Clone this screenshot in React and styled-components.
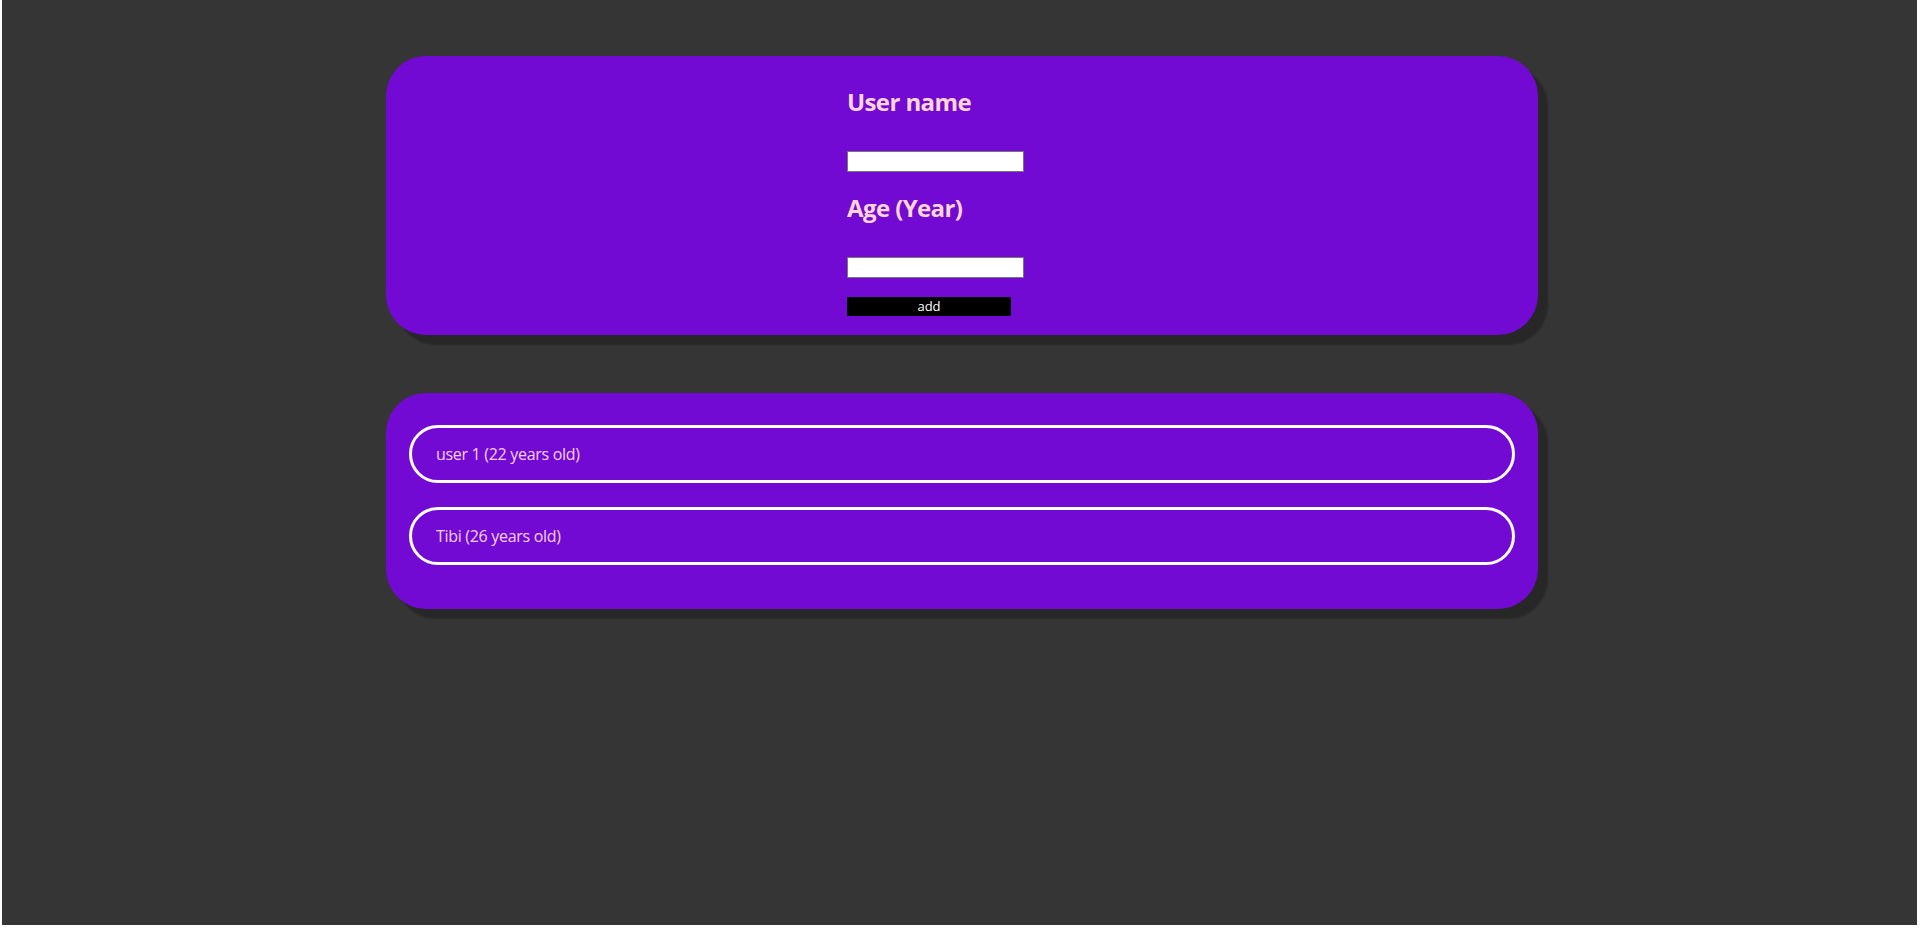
import React from "react";
import styled, { createGlobalStyle } from "styled-components";

const GlobalStyle = createGlobalStyle`
    html, body {
        margin: 0;
        padding: 0;
        background: #ffffff;
    }
    body {
        font-family: "Open Sans", "Noto Sans", sans-serif;
    }
`;

const users = [
    { id: 1, name: "user 1", age: 22 },
    { id: 2, name: "Tibi", age: 26 },
];

const App = () => {
    return (
        <>
            <GlobalStyle />
            <Page>
                <Card>
                    <Form onSubmit={(e) => e.preventDefault()}>
                        <Label htmlFor="username">User name</Label>
                        <Input id="username" type="text" />
                        <Label htmlFor="age">Age (Year)</Label>
                        <Input id="age" type="number" />
                        <AddButton type="submit">add</AddButton>
                    </Form>
                </Card>

                <ListCard>
                    <UserList>
                        {users.map((user) => (
                            <UserItem key={user.id}>
                                {user.name} ({user.age} years old)
                            </UserItem>
                        ))}
                    </UserList>
                </ListCard>
            </Page>
        </>
    );
};

const Page = styled.div`
    background-color: #353535;
    margin: 0 3px 0 2px;
    height: 925px;
    padding: 56px 0 0 5px;
    box-sizing: border-box;
    display: flex;
    flex-direction: column;
    align-items: center;
    gap: 58px;
`;

const Card = styled.div`
    width: 1152px;
    box-sizing: border-box;
    background-color: #720ad4;
    border-radius: 40px;
    box-shadow: 10px 10px 2px rgba(0, 0, 0, 0.25);
    padding: 30px 0 19px;
    display: flex;
    justify-content: center;
`;

const Form = styled.form`
    width: 230px;
    display: flex;
    flex-direction: column;
    align-items: flex-start;
`;

const Label = styled.label`
    display: block;
    font-size: 24px;
    font-weight: 700;
    line-height: 32px;
    letter-spacing: -0.6px;
    color: #fdd6d3;
    margin-bottom: 33px;
`;

const Input = styled.input`
    width: 177px;
    height: 21px;
    box-sizing: border-box;
    border: 1px solid #767676;
    background: #ffffff;
    padding: 1px 2px;
    margin: 0 0 20px;
    font: 13.33px "Liberation Sans", Arial, sans-serif;
    outline: none;
    -moz-appearance: textfield;
    &::-webkit-outer-spin-button,
    &::-webkit-inner-spin-button {
        -webkit-appearance: none;
        margin: 0;
    }
    & + & {
        margin-bottom: 19px;
    }
`;

const AddButton = styled.button`
    width: 164px;
    height: 19px;
    margin-top: -1px;
    padding: 0;
    border: none;
    background: #000000;
    color: #ffffff;
    font-family: "Open Sans", "Noto Sans", sans-serif;
    font-size: 13px;
    line-height: 19px;
    cursor: pointer;
`;

const ListCard = styled(Card)`
    display: block;
    padding: 32px 23px 44px;
`;

const UserList = styled.ul`
    list-style: none;
    margin: 0;
    padding: 0;
    display: flex;
    flex-direction: column;
    gap: 24px;
`;

const UserItem = styled.li`
    height: 58px;
    box-sizing: border-box;
    border: 3px solid #ffffff;
    border-radius: 29px;
    padding: 0 24px;
    display: flex;
    align-items: center;
    font-size: 16px;
    letter-spacing: -0.3px;
    color: #f6d2ee;
`;

export default App;
